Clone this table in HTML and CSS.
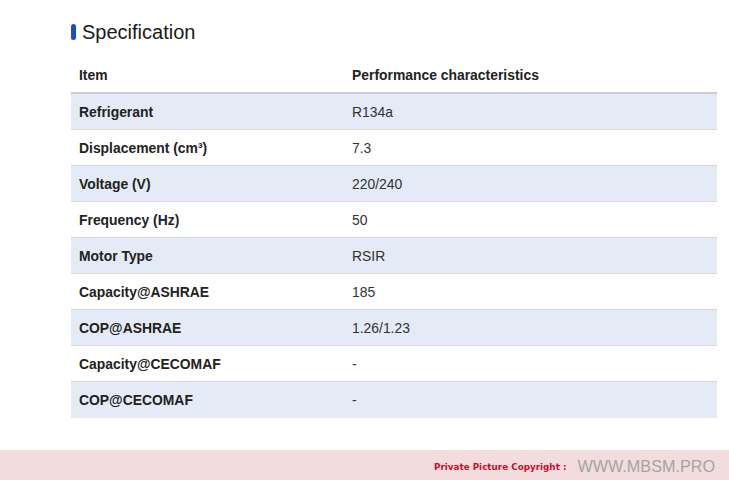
FILE: index.html
```html
<!DOCTYPE html>
<html>
<head>
<meta charset="utf-8">
<link rel="stylesheet" href="styles.css">
</head>
<body>
<div class="page">
  <h2 class="title"><span class="bar"></span>Specification</h2>
  <table class="spec">
    <thead>
      <tr><th class="c1">Item</th><th>Performance characteristics</th></tr>
    </thead>
    <tbody>
      <tr class="alt"><td class="c1">Refrigerant</td><td>R134a</td></tr>
      <tr><td class="c1">Displacement (cm³)</td><td>7.3</td></tr>
      <tr class="alt"><td class="c1">Voltage (V)</td><td>220/240</td></tr>
      <tr><td class="c1">Frequency (Hz)</td><td>50</td></tr>
      <tr class="alt"><td class="c1">Motor Type</td><td>RSIR</td></tr>
      <tr><td class="c1">Capacity@ASHRAE</td><td>185</td></tr>
      <tr class="alt"><td class="c1">COP@ASHRAE</td><td>1.26/1.23</td></tr>
      <tr><td class="c1">Capacity@CECOMAF</td><td>-</td></tr>
      <tr class="alt last"><td class="c1">COP@CECOMAF</td><td>-</td></tr>
    </tbody>
  </table>
</div>
<div class="footer">
  <span class="copy">Private Picture Copyright :</span>
  <span class="site">WWW.MBSM.PRO</span>
</div>
</body>
</html>
```
FILE: styles.css
```css
html, body {
  margin: 0;
  padding: 0;
  background: #fff;
  font-family: "Liberation Sans", Arial, sans-serif;
  color: #222;
}
.page {
  padding: 19px 12px 0 71px;
  height: 450px;
  box-sizing: border-box;
}
.title {
  display: flex;
  align-items: center;
  margin: 0;
  height: 26px;
  font-size: 20px;
  font-weight: normal;
  color: #1a1a1a;
}
.bar {
  display: inline-block;
  width: 5px;
  height: 16px;
  border-radius: 3px;
  background: #1a4fc4;
  margin-right: 6px;
}
.spec {
  margin-top: 12px;
  width: 646px;
  border-collapse: collapse;
  font-size: 13.9px;
}
.spec th {
  text-align: left;
  font-weight: bold;
  height: 35px;
  padding: 0 8px;
  border-bottom: 2px solid #c9ccd2;
  color: #222;
}
.spec td {
  height: 35px;
  padding: 0 8px;
  border-bottom: 1px solid #d6d8dc;
  color: #333;
}
.spec tr.last td { border-bottom: none; height: 36px; }
.spec td.c1 { font-weight: bold; color: #222; }
.spec .c1 { width: 257px; }
.spec tr.alt td { background: #e4eaf6; }
.footer {
  height: 30px;
  background: #f2dcdd;
  display: flex;
  align-items: center;
  justify-content: flex-end;
  padding-right: 14px;
  padding-top: 3px;
  box-sizing: border-box;
}
.copy {
  font-family: "DejaVu Sans", Verdana, sans-serif;
  font-size: 8.8px;
  font-weight: bold;
  color: #c8102e;
  margin-right: 11px;
}
.site {
  font-family: "Liberation Sans", Arial, sans-serif;
  font-size: 16.2px;
  font-weight: normal;
  color: #a4a4a4;
}
```
